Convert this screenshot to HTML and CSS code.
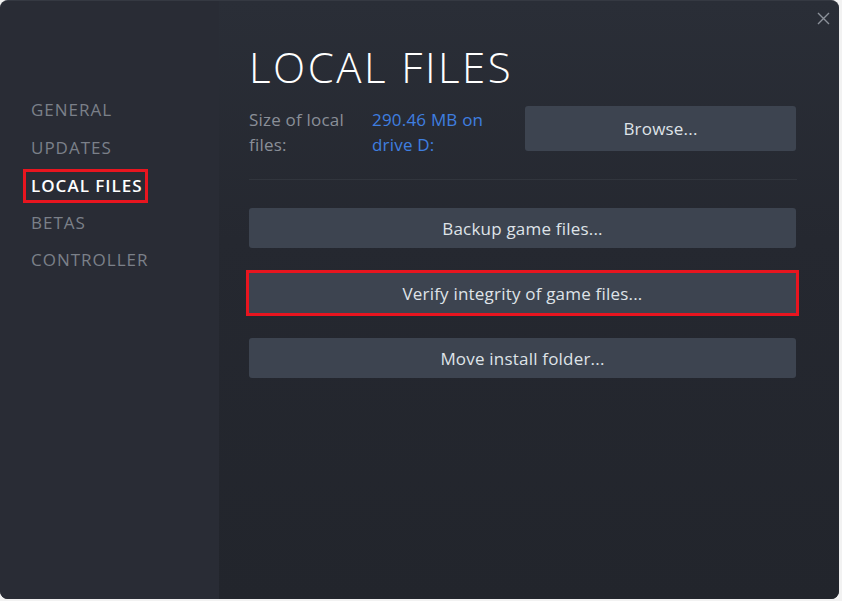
FILE: index.html
```html
<!DOCTYPE html>
<html>
<head>
<meta charset="utf-8">
<link rel="stylesheet" href="styles.css">
</head>
<body>
<div class="window">
  <nav class="sidebar">
    <div class="nav-item">GENERAL</div>
    <div class="nav-item">UPDATES</div>
    <div class="nav-item active"><span class="highlight">LOCAL FILES</span></div>
    <div class="nav-item">BETAS</div>
    <div class="nav-item">CONTROLLER</div>
  </nav>
  <main class="content">
    <h1 class="title">LOCAL FILES</h1>
    <div class="info-row">
      <div class="info-label">Size of local files:</div>
      <div class="info-value">290.46 MB on drive D:</div>
      <button class="btn btn-browse">Browse...</button>
    </div>
    <div class="separator"></div>
    <div class="actions">
      <button class="btn btn-wide">Backup game files...</button>
      <button class="btn btn-wide btn-marked">Verify integrity of game files...</button>
      <button class="btn btn-wide">Move install folder...</button>
    </div>
  </main>
  <button class="close" aria-label="Close">
    <svg width="13" height="13" viewBox="0 0 13 13"><path d="M1 1 L12 12 M12 1 L1 12" stroke="#8c919a" stroke-width="1.4" fill="none"/></svg>
  </button>
</div>
</body>
</html>
```

FILE: styles.css
```css
* { box-sizing: border-box; }
html, body {
  margin: 0;
  padding: 0;
  background: #f2f2f2;
}
body {
  font-family: "Open Sans", "Noto Sans", sans-serif;
  width: 842px;
  height: 601px;
}
.window {
  position: relative;
  width: 839px;
  height: 599px;
  display: flex;
  border-radius: 8px;
  overflow: hidden;
  background: #23262e;
  border-top: 1px solid #353942;
}
.sidebar {
  width: 219px;
  flex: none;
  background: #292c35;
  padding-top: 90px;
  padding-left: 31px;
}
.nav-item {
  font-size: 17px;
  line-height: 37.5px;
  height: 37.5px;
  color: #7b8089;
  letter-spacing: 1px;
}
.nav-item.active {
  color: #ffffff;
  font-weight: 600;
  letter-spacing: 1px;
}
.highlight {
  display: inline-block;
  line-height: 28px;
  padding: 0 2px 0 5px;
  margin-left: -5px;
  outline: 3px solid #e8151f;
  vertical-align: middle;
}
.content {
  flex: 1;
  padding: 0 42px 0 30px;
  background: linear-gradient(180deg, #2a2e37 0%, #252830 40%, #22252c 100%);
}
.title {
  margin: 40px 0 0 0;
  font-size: 42px;
  line-height: 52px;
  font-weight: 300;
  color: #ffffff;
  letter-spacing: 2.5px;
}
.info-row {
  display: flex;
  align-items: flex-start;
  margin-top: 13px;
}
.info-label {
  width: 123px;
  font-size: 17px;
  line-height: 25px;
  color: #8a8f98;
  padding-right: 20px;
  margin-top: 1px;
  letter-spacing: 0.2px;
}
.info-value {
  width: 153px;
  font-size: 17px;
  line-height: 25px;
  color: #3f7fe0;
  padding-right: 20px;
  margin-top: 1px;
  letter-spacing: 0.2px;
}
.btn {
  font-family: inherit;
  border: none;
  background: #3d4450;
  color: #dfe3e8;
  font-size: 17px;
  letter-spacing: 0.2px;
  border-radius: 3px;
  padding: 0;
  cursor: pointer;
}
.btn-browse {
  width: 271px;
  height: 45px;
}
.separator {
  height: 1px;
  background: #31353d;
  margin-top: 22px;
}
.actions {
  display: flex;
  flex-direction: column;
  gap: 25px;
  margin-top: 28px;
}
.btn-wide {
  width: 547px;
  height: 40px;
}
.btn-marked {
  border-radius: 0;
  outline: 3px solid #e8151f;
  outline-offset: 0;
}
.close {
  position: absolute;
  top: 10px;
  right: 8px;
  width: 15px;
  height: 15px;
  padding: 0;
  border: none;
  background: transparent;
  display: flex;
  align-items: center;
  justify-content: center;
}
```
